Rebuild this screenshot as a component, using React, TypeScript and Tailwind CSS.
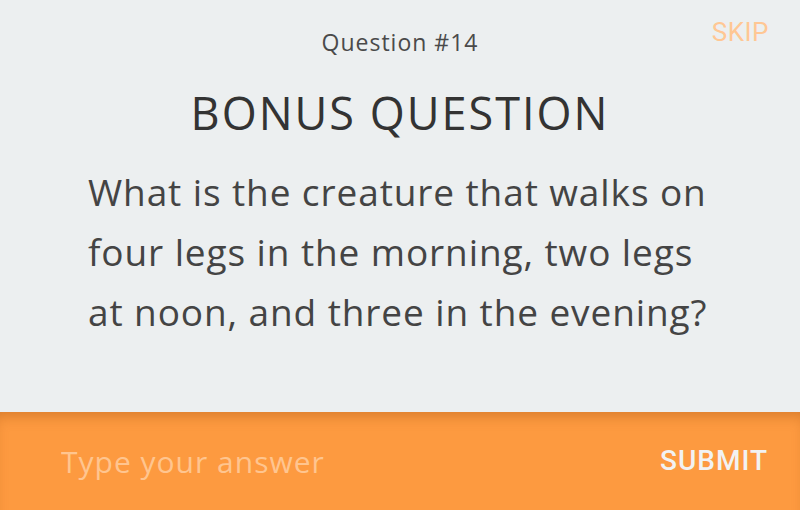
export default function App() {
  const lines = [
    "What is the creature that walks on",
    "four legs in the morning, two legs",
    "at noon, and three in the evening?",
  ];

  return (
    <div
      className="w-[800px] h-[510px] flex flex-col bg-[#eceff0] overflow-hidden"
      style={{ fontFamily: "'Open Sans', 'Liberation Sans', sans-serif" }}
    >
      {/* QUESTION CARD */}
      <div className="relative h-[412px] flex flex-col items-center pt-[27px]">
        <button className="absolute right-[31px] top-[13px] text-[26px] text-[#ffc794] font-['Roboto',sans-serif] tracking-[0.5px]">
          SKIP
        </button>

        <p className="text-[23px] leading-[30px] tracking-[1px] text-[#4a4a4a]">
          Question #14
        </p>

        <h1 className="mt-[31px] text-[45px] leading-[50px] font-medium tracking-[2px] text-[#333333]">
          BONUS QUESTION
        </h1>

        <p className="mt-[24px] w-[800px] pl-[88px] text-[37px] leading-[60px] tracking-[0.9px] text-[#444444]">
          {lines.map((line) => (
            <span key={line} className="block whitespace-nowrap">
              {line}
            </span>
          ))}
        </p>
      </div>

      {/* ANSWER BAR */}
      <div className="flex-1 flex items-center justify-between pl-[61px] pr-[32px] bg-[#fd9a40] shadow-[inset_0_10px_14px_-6px_rgba(150,70,10,0.35)]">
        <input
          placeholder="Type your answer"
          className="w-[400px] bg-transparent outline-none text-[30px] tracking-[1px] text-white placeholder:text-[#ffc58f]"
        />
        <button className="text-[28px] font-medium tracking-[1px] text-[#f2f2f2] font-['Roboto',sans-serif]">
          SUBMIT
        </button>
      </div>
    </div>
  );
}
